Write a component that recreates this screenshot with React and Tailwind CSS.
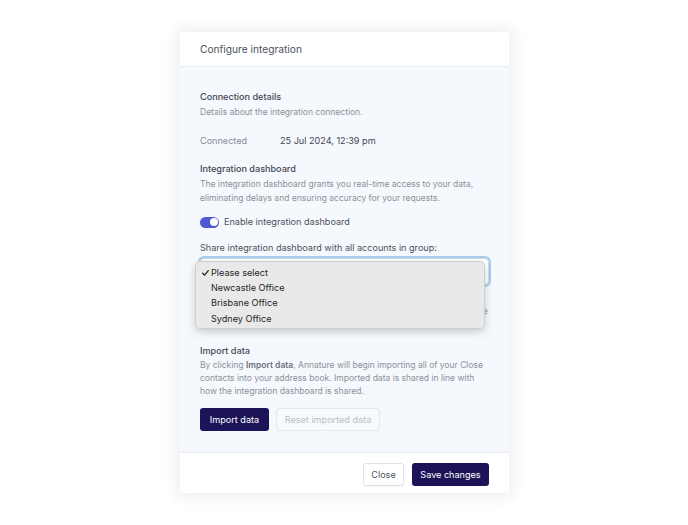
import React from "react";

const font = { fontFamily: 'Inter, "Noto Sans", "Liberation Sans", sans-serif' };

export default function App() {
  return (
    <div className="w-[688px] h-[525px] bg-white relative" style={font}>
      <div className="absolute left-[180px] top-[32px] w-[329px] bg-white shadow-[0_0_14px_4px_rgba(0,0,0,0.07)]">
        {/* header */}
        <div className="h-[35px] flex items-center px-[20px] border-b border-[#e8ecf1]">
          <span className="text-[10.2px] text-[#4b5260] leading-none">Configure integration</span>
        </div>
        {/* body */}
        <div className="bg-[#f5f8fc] px-[20px] pt-[23px] pb-[21px]">
          <div className="text-[9.1px] leading-[14px] font-medium text-[#3f4654]">Connection details</div>
          <div className="mt-[1px] text-[8.5px] leading-[14px] text-[#8c919b]">Details about the integration connection.</div>
          <div className="mt-[14px] flex items-center h-[16px] text-[9.1px]">
            <span className="w-[80px] text-[#868b95]">Connected</span>
            <span className="text-[#3f4654]">25 Jul 2024, 12:39 pm</span>
          </div>

          <div className="mt-[13px] text-[9.1px] leading-[14px] font-medium text-[#3f4654]">Integration dashboard</div>
          <div className="mt-[1px] text-[8.5px] leading-[14px] text-[#8c919b]">
            The integration dashboard grants you real-time access to your data, eliminating delays and ensuring accuracy for your requests.
          </div>
          <div className="mt-[9px] flex items-center h-[16px] gap-[5px]">
            <div className="w-[19px] h-[11px] rounded-full bg-[#5057d4] flex items-center justify-end pr-[1.5px]">
              <div className="w-[8px] h-[8px] rounded-full bg-white" />
            </div>
            <span className="text-[9.1px] text-[#4b5260]">Enable integration dashboard</span>
          </div>

          <div className="mt-[11px] text-[9.1px] leading-[14px] text-[#4b5260]">Share integration dashboard with all accounts in group:</div>
          <div className="mt-[3px] relative">
            <div className="h-[27px] rounded-[4px] bg-white border border-[#d4d9e0] ring-2 ring-[#a9cdee] flex items-center justify-end pr-[4px]">
              <svg width="6" height="4" viewBox="0 0 6 4"><path d="M0.5 0.5 L3 3 L5.5 0.5" fill="none" stroke="#555" strokeWidth="1" /></svg>
            </div>
            <div className="mt-[8px] text-[8.5px] leading-[12px] text-[#8c919b]">
              All accounts in your group will be able to view this dashboard and the data it holds for
              each account, and any imported data is shared with the accounts in the group.
            </div>
            {/* native dropdown */}
            <div className="absolute left-[-5px] top-[3px] w-[290px] h-[68px] rounded-[5px] bg-[#e9e9ea] border border-[#cfcfd1] shadow-[0_3px_8px_rgba(0,0,0,0.18)] pt-[3px] text-[9.1px] text-[#1f1f1f]">
              <div className="h-[15.3px] flex items-center">
                <span className="w-[15px] flex justify-end pr-[2px]">
                  <svg width="7" height="6" viewBox="0 0 7 6"><path d="M0.7 3.2 L2.6 5.1 L6.3 0.7" fill="none" stroke="#1f1f1f" strokeWidth="1.3" strokeLinecap="round" strokeLinejoin="round" /></svg>
                </span>
                <span>Please select</span>
              </div>
              <div className="h-[15.3px] flex items-center pl-[15px]">Newcastle Office</div>
              <div className="h-[15.3px] flex items-center pl-[15px]">Brisbane Office</div>
              <div className="h-[15.3px] flex items-center pl-[15px]">Sydney Office</div>
            </div>
          </div>

          <div className="mt-[15px] text-[9.1px] leading-[14px] font-medium text-[#3f4654]">Import data</div>
          <div className="mt-[1px] text-[8.5px] leading-[13px] text-[#8c919b]">
            By clicking <span className="font-semibold text-[#6b717c]">Import data</span>, Annature will begin importing all of your Close contacts into your address book. Imported data is shared in line with how the integration dashboard is shared.
          </div>
          <div className="mt-[10px] flex gap-[7px]">
            <button className="h-[23px] w-[69px] rounded-[3px] bg-[#1c1456] text-white text-[9.1px]">Import data</button>
            <button className="h-[23px] w-[104px] rounded-[3px] bg-[#f7f9fc] border border-[#e4e8ee] text-[#b9bec7] text-[9.1px]">Reset imported data</button>
          </div>
        </div>
        {/* footer */}
        <div className="border-t border-[#e8ecf1] flex justify-end gap-[8px] px-[20px] pt-[10px] pb-[7px]">
          <button className="h-[23px] w-[41px] rounded-[3px] bg-white border border-[#dfe3e9] text-[#4b5260] text-[9.1px] shadow-[0_1px_1px_rgba(0,0,0,0.04)]">Close</button>
          <button className="h-[23px] w-[77px] rounded-[3px] bg-[#1c1456] text-white text-[9.1px]">Save changes</button>
        </div>
      </div>
    </div>
  );
}
